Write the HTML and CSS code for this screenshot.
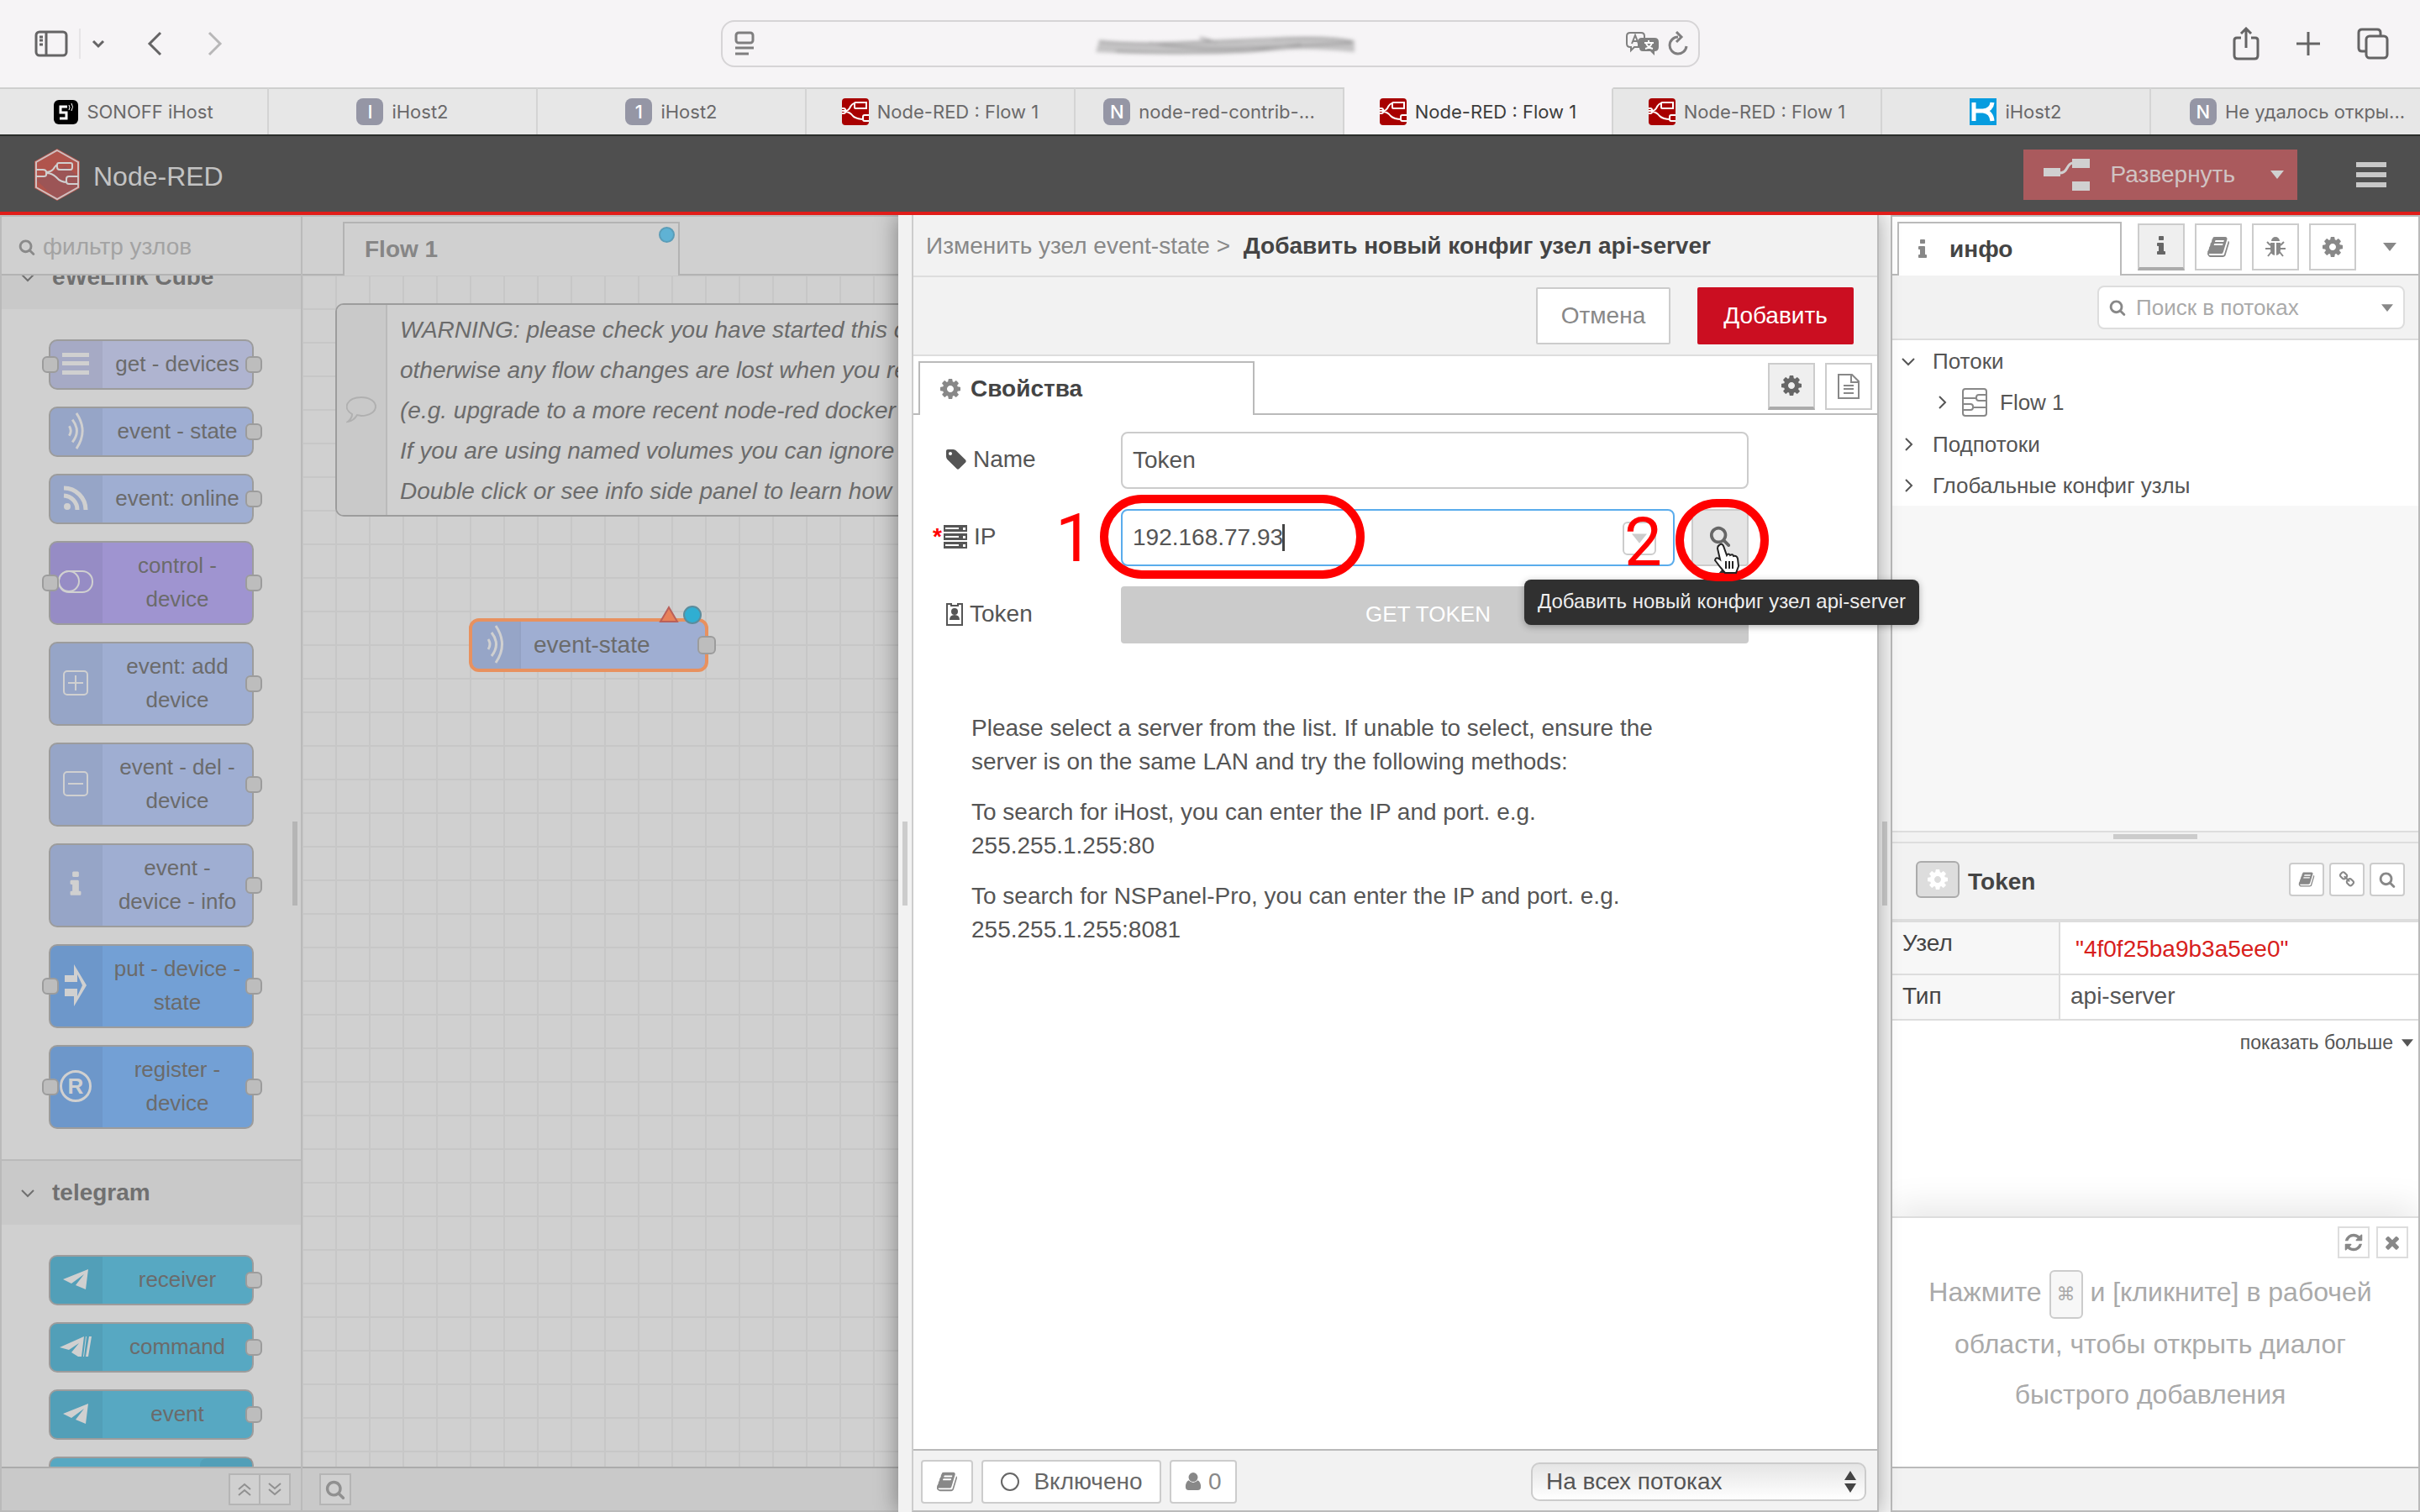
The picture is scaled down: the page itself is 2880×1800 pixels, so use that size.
FILE: index.html
```html
<!DOCTYPE html>
<html lang="ru">
<head>
<meta charset="utf-8">
<title>Node-RED : Flow 1</title>
<link rel="stylesheet" href="styles.css">
</head>
<body>
<svg class="defs" aria-hidden="true">
  <symbol id="search" viewBox="0 0 1792 1792"><path d="M1216 832q0-185-131.500-316.500t-316.500-131.500-316.500 131.500-131.500 316.500 131.500 316.500 316.500 131.500 316.500-131.500 131.500-316.500zm512 832q0 52-38 90t-90 38q-54 0-90-38l-343-342q-179 124-399 124-143 0-273.500-55.500t-225-150-150-225-55.500-273.500 55.500-273.500 150-225 225-150 273.500-55.500 273.500 55.500 225 150 150 225 55.500 273.500q0 220-124 399l343 343q37 37 37 90z"/></symbol>
  <symbol id="cog" viewBox="0 0 1792 1792"><path d="M1152 896q0-106-75-181t-181-75-181 75-75 181 75 181 181 75 181-75 75-181zm512-109v222q0 12-8 23t-20 13l-185 28q-19 54-39 91 35 50 107 138 10 12 10 25t-9 23q-27 37-99 108t-94 71q-12 0-26-9l-138-108q-44 23-91 38-16 136-29 186-7 28-36 28h-222q-14 0-24.500-8.500t-11.500-21.500l-28-184q-49-16-90-37l-141 107q-10 9-25 9-14 0-25-11-126-114-165-168-7-10-7-23 0-12 8-23 15-21 51-66.500t54-70.500q-27-50-41-99l-183-27q-13-2-21-12.500t-8-23.500v-222q0-12 8-23t19-13l186-28q14-46 39-92-40-57-107-138-10-12-10-24 0-10 9-23 26-36 98.500-107.500t94.500-71.500q13 0 26 10l138 107q44-23 91-38 16-136 29-186 7-28 36-28h222q14 0 24.500 8.500t11.500 21.500l28 184q49 16 90 37l142-107q9-9 24-9 13 0 25 10 129 119 165 170 7 8 7 22 0 12-8 23-15 21-51 66.500t-54 70.500q26 50 41 98l183 28q13 2 21 12.500t8 23.500z"/></symbol>
  <symbol id="book" viewBox="0 0 1792 1792"><path d="M1703 478q40 57 18 129l-275 906q-19 64-76.500 107.500t-122.500 43.500h-923q-77 0-148.500-53.500t-99.500-131.500q-24-67-2-127 0-4 3-27t4-37q1-8-3-21.500t-3-19.500q2-11 8-21t16.500-23.500 16.500-23.500q23-38 45-91.500t30-91.500q3-10 .5-30t-.5-28q3-11 17-28t17-23q21-36 42-92t25-90q1-9-2.500-32t.5-28q4-13 22-30.500t22-22.500q19-26 42.500-84.500t27.500-96.500q1-8-3-25.500t-2-26.500q2-8 9-18t18-23 17-21q8-12 16.500-30.500t15-35 16-36 19.500-32 26.500-23.500 36-11.500 47.500 5.500l-1 3q38-9 51-9h761q74 0 114 56t18 130l-274 906q-36 119-71.500 153.500t-128.500 34.500h-869q-27 0-38 15-11 16-1 43 24 70 144 70h923q29 0 56-15.500t35-41.500l300-987q7-22 5-57 38 15 59 43zm-1064 2q-4 13 2 22.500t20 9.500h608q13 0 25.500-9.500t16.500-22.500l21-64q4-13-2-22.500t-20-9.500h-608q-13 0-25.500 9.500t-16.500 22.500zm-83 256q-4 13 2 22.500t20 9.500h608q13 0 25.500-9.500t16.500-22.500l21-64q4-13-2-22.500t-20-9.500h-608q-13 0-25.500 9.500t-16.500 22.500z"/></symbol>
  <symbol id="refresh" viewBox="0 0 1792 1792"><path d="M1639 1056q0 5-1 7-64 268-268 434.500t-478 166.500q-146 0-282.500-55t-243.500-157l-129 129q-19 19-45 19t-45-19-19-45v-448q0-26 19-45t45-19h448q26 0 45 19t19 45-19 45l-137 137q71 66 161 102t187 36q134 0 250-65t186-179q11-17 53-117 8-23 30-23h192q13 0 22.500 9.500t9.500 22.500zm25-800v448q0 26-19 45t-45 19h-448q-26 0-45-19t-19-45 19-45l138-138q-148-137-349-137-134 0-250 65t-186 179q-11 17-53 117-8 23-30 23h-199q-13 0-22.500-9.500t-9.500-22.500v-7q65-268 270-434.500t480-166.500q146 0 284 55.500t245 156.500l130-129q19-19 45-19t45 19 19 45z"/></symbol>
  <symbol id="times" viewBox="0 0 1792 1792"><path d="M1490 1322q0 40-28 68l-136 136q-28 28-68 28t-68-28l-294-294-294 294q-28 28-68 28t-68-28l-136-136q-28-28-28-68t28-68l294-294-294-294q-28-28-28-68t28-68l136-136q28-28 68-28t68 28l294 294 294-294q28-28 68-28t68 28l136 136q28 28 28 68t-28 68l-294 294 294 294q28 28 28 68z"/></symbol>
  <symbol id="tag" viewBox="128 128 1536 1536"><path d="M576 448q0-53-37.500-90.500t-90.500-37.500-90.500 37.500-37.500 90.500 37.500 90.500 90.500 37.500 90.500-37.500 37.500-90.500zm1067 576q0 53-37 90l-491 492q-39 37-91 37-53 0-90-37l-715-716q-38-37-64.500-101t-26.500-117v-416q0-52 38-90t90-38h416q53 0 117 26.500t102 64.500l715 714q37 39 37 91z"/></symbol>
  <symbol id="info" viewBox="0 0 1792 1792"><path d="M1216 1344v128q0 26-19 45t-45 19h-512q-26 0-45-19t-19-45v-128q0-26 19-45t45-19h64v-384h-64q-26 0-45-19t-19-45v-128q0-26 19-45t45-19h384q26 0 45 19t19 45v576h64q26 0 45 19t19 45zm-128-1152v192q0 26-19 45t-45 19h-256q-26 0-45-19t-19-45v-192q0-26 19-45t45-19h256q26 0 45 19t19 45z"/></symbol>
  <symbol id="link" viewBox="0 0 1792 1792"><path d="M1520 1216q0-40-28-68l-208-208q-28-28-68-28-42 0-72 32 3 3 19 18.500t21.500 21.500 15 19 13 25.500 3.500 27.500q0 40-28 68t-68 28q-15 0-27.500-3.500t-25.500-13-19-15-21.500-21.500-18.500-19q-33 31-33 73 0 40 28 68l206 207q27 27 68 27 40 0 68-26l147-146q28-28 28-67zm-703-705q0-40-28-68l-206-207q-28-28-68-28-39 0-68 27l-147 146q-28 28-28 67 0 40 28 68l208 208q27 27 68 27 42 0 72-31-3-3-19-18.500t-21.500-21.500-15-19-13-25.500-3.500-27.500q0-40 28-68t68-28q15 0 27.500 3.500t25.500 13 19 15 21.500 21.500 18.500 19q33-31 33-73zm895 705q0 120-85 203l-147 146q-83 83-203 83-121 0-204-85l-206-207q-83-83-83-203 0-123 88-209l-88-88q-86 88-208 88-120 0-204-84l-208-208q-84-84-84-204t85-203l147-146q83-83 203-83 121 0 204 85l206 207q83 83 83 203 0 123-88 209l88 88q86-88 208-88 120 0 204 84l208 208q84 84 84 204z"/></symbol>
  <symbol id="bug" viewBox="0 0 28 28"><path d="M9 7a5 5 0 0 1 10 0z"/><path d="M8 9h5v15q-5-1-5-7zM15 9h5v8q0 6-5 7z"/><path d="M8 12L4 8M20 12l4-4M8 16H2M20 16h6M9 20l-4 5M19 20l4 5" fill="none" stroke="currentColor" stroke-width="2"/></symbol>
  <symbol id="user" viewBox="0 0 22 28"><circle cx="11" cy="8" r="6"/><path d="M5 12q6 6 12 0 4 2 4 9 0 4-4 4H5q-4 0-4-4 0-7 4-9z"/></symbol>
  <symbol id="down" viewBox="0 0 18 18"><path d="M2 6l7 7 7-7" fill="none" stroke="currentColor" stroke-width="2"/></symbol>
  <symbol id="right" viewBox="0 0 18 18"><path d="M6 2l7 7-7 7" fill="none" stroke="currentColor" stroke-width="2"/></symbol>
  <symbol id="caret" viewBox="0 0 16 10"><path d="M0 0h16l-8 10z"/></symbol>
  <symbol id="wave" viewBox="0 0 24 48"><path d="M4 18q4 6 0 12M8 10q11 14 0 28M13 2q15 22 0 44" fill="none" stroke="currentColor" stroke-width="3"/></symbol>
  <symbol id="rss" viewBox="0 0 30 30"><circle cx="5" cy="25" r="4"/><path d="M1 12a17 17 0 0 1 16 17M1 3a26 26 0 0 1 26 26" fill="none" stroke="currentColor" stroke-width="5"/></symbol>
  <symbol id="plane" viewBox="0 0 30 26"><path d="M0 13L30 1l-3 24-12-5 10-13-15 11z"/></symbol>
  <symbol id="plane2" viewBox="0 0 38 26"><path d="M0 14L29 1l-3 24h-4l-8-5 9-11-12 8z"/><path d="M31 1h1l-3 24h-1zM35 1h3l-4 24h-3z"/></symbol>
  <symbol id="nr" viewBox="0 0 32 32"><rect width="32" height="32" rx="4" fill="#a80000"/><path d="M0 15h4q3 0 5-3 3-6 6-6M4 16q5 0 9 5 4 4 13 4M15 6q0-1 1-1h13v7H16q-1 0-1-1zM32 20h-5q-2 0-2 2v3q0 2 2 2h5M0 12h2q2 0 2 2v2q0 2-2 2H0" fill="none" stroke="#fff" stroke-width="2"/></symbol>
</svg>

<header class="browser">
  <div class="toolbar">
    <div class="tools-left">
      <svg width="40" height="32" viewBox="0 0 40 32" class="line dark"><rect x="2" y="2" width="36" height="28" rx="4"/><path d="M14 2v28M6 8h4M6 12h4M6 17h4"/></svg>
      <span class="tool-divider"></span>
      <svg width="16" height="12" viewBox="0 0 16 12" class="line dark menu-arrow"><path d="M2 3l6 6 6-6"/></svg>
      <svg width="18" height="30" viewBox="0 0 18 30" class="line dark back"><path d="M16 2L3 15l13 13"/></svg>
      <svg width="18" height="30" viewBox="0 0 18 30" class="line light"><path d="M2 2l13 13L2 28"/></svg>
    </div>
    <div class="address">
      <svg width="24" height="30" viewBox="0 0 24 30" class="line mid"><rect x="2" y="2" width="20" height="12" rx="3"/><path d="M1 20h22M1 27h16"/></svg>
      <svg class="scribble" width="320" height="34" viewBox="0 0 320 34"><path d="M10 12q50 3 90 2t110-3q60-6 104 0v14q-50-5-80-3-50 5-110 5Q60 28 6 25z" fill="#c4c3c4"/><path d="M10 12q40 4 90 2t120-5 92 4M70 14q50 8 100 7t140-7M130 8l20 5M30 24q80 4 160 0l60-8" fill="none" stroke="#9c9b9c" stroke-width="2"/></svg>
      <div class="address-end">
        <svg width="40" height="30" viewBox="0 0 40 30"><path d="M5 2h13q4 0 4 4v3h-3q-4 0-4 4v6h-5l-4 4v-4H5q-4 0-4-4V6q0-4 4-4z" fill="none" stroke="#808080" stroke-width="2"/><path d="M7 15l4-10 4 10M8 12h5" fill="none" stroke="#808080" stroke-width="2"/><path d="M20 8h14q5 0 5 5v6q0 5-5 5v5l-5-5h-9q-4 0-4-4v-8q0-4 4-4z" fill="#808080"/><path d="M22 14h11M27 11v3M31 14q-2 6-8 7M24 15q3 5 8 6" fill="none" stroke="#fff" stroke-width="2"/></svg>
        <svg width="24" height="30" viewBox="0 0 24 30" class="line mid"><path d="M12 7a10 10 0 1 0 10 11M10 1l6 6-6 6"/></svg>
      </div>
    </div>
    <div class="tools-right">
      <svg width="32" height="40" viewBox="0 0 32 40" class="line dark"><path d="M10 13H5q-3 0-3 3v18q0 4 4 4h20q4 0 4-4V16q0-3-3-3h-5M16 25V3M10 8l6-6 6 6"/></svg>
      <svg width="28" height="28" viewBox="0 0 28 28" class="line dark"><path d="M14 0v28M0 14h28"/></svg>
      <svg width="38" height="38" viewBox="0 0 38 38" class="line dark"><rect x="11" y="10" width="25" height="26" rx="4"/><path d="M11 28H6q-4 0-4-4V6q0-4 4-4h18q4 0 4 4v4"/></svg>
    </div>
  </div>
  <nav class="tabs">
    <a class="tab" href="#"><svg width="29" height="29" viewBox="0 0 29 29"><rect width="29" height="29" rx="6" fill="#000"/><path d="M16 8H8v7h7v7H7" fill="none" stroke="#fff" stroke-width="3"/><path d="M18 6q2 3 0 6M21 4q3 4 0 9" fill="none" stroke="#fff" stroke-width="1"/></svg>SONOFF iHost</a>
    <a class="tab" href="#"><span class="letter">I</span>iHost2</a>
    <a class="tab" href="#"><span class="letter">1</span>iHost2</a>
    <a class="tab" href="#"><svg width="32" height="32"><use href="#nr"/></svg>Node-RED : Flow 1</a>
    <a class="tab" href="#"><span class="letter">N</span>node-red-contrib-...</a>
    <a class="tab current" href="#"><svg width="32" height="32"><use href="#nr"/></svg>Node-RED : Flow 1</a>
    <a class="tab" href="#"><svg width="32" height="32"><use href="#nr"/></svg>Node-RED : Flow 1</a>
    <a class="tab" href="#"><svg width="32" height="32" viewBox="0 0 32 32"><path d="M0 0h32v32H0z" fill="#069cdf"/><path d="M5 5v22M6 15h10q10 1 11 12M27 5q-1 9-11 10" fill="none" stroke="#fff" stroke-width="5"/></svg>iHost2</a>
    <a class="tab last" href="#"><span class="letter">N</span>Не удалось откры...</a>
  </nav>
</header>

<div class="app-header">
  <svg width="56" height="64" viewBox="0 0 56 64"><path d="M28 1l27 15v32L28 63 1 48V16z" fill="#b0544c"/><path d="M3 38l24 23 26-14V34L38 22z" fill="#9c5556"/><path d="M28 3l25 14v30L28 61 3 47V17z" fill="none" stroke="#cfc0c0" stroke-width="2"/><path d="M3 26h8q4 0 4 3v3q0 2-3 2H3M15 29q7 0 10-6 2-3 4-3M15 30q7 0 12 5 5 6 13 6M30 18h14q2 0 2 2v3q0 3-2 3H31q-3 0-3-3v-3q0-2 2-2zM53 34H42q-3 0-3 3v3q0 3 3 3h11" fill="none" stroke="#d0d0d0" stroke-width="2"/></svg>
  <span class="app-name">Node-RED</span>
  <button class="deploy"><svg width="56" height="38" viewBox="0 0 56 38"><path d="M0 11h20v10H0zM34 0h21v11H34zM34 27h21v11H34z" fill="#d0d0d0"/><path d="M19 17q6 0 9-6t7-6" fill="none" stroke="#d0d0d0" stroke-width="3"/></svg><span>Развернуть</span><svg width="16" height="10" class="deploy-caret"><use href="#caret"/></svg></button>
  <button class="main-menu" aria-label="Меню"><svg width="36" height="30" viewBox="0 0 36 30"><path d="M0 0h36v6H0zM0 12h36v6H0zM0 24h36v6H0z"/></svg></button>
</div>

<main class="editor">
  <aside class="palette">
    <label class="filter"><svg width="20" height="20"><use href="#search"/></svg><input type="text" placeholder="фильтр узлов" aria-label="фильтр узлов"></label>
    <div class="palette-scroll">
      <h3 class="category first"><svg width="18" height="18"><use href="#down"/></svg>eWeLink Cube</h3>
      <div class="nodes">
        <div class="node pale in out"><span class="node-icon"><svg width="32" height="28" viewBox="0 0 32 28"><path d="M0 1h32v5H0zM0 11h32v5H0zM0 22h32v5H0z"/></svg></span><span class="node-label">get - devices</span></div>
        <div class="node blue out"><span class="node-icon"><svg width="24" height="46"><use href="#wave"/></svg></span><span class="node-label">event - state</span></div>
        <div class="node blue out"><span class="node-icon"><svg width="30" height="30"><use href="#rss"/></svg></span><span class="node-label">event: online</span></div>
        <div class="node tall violet in out"><span class="node-icon"><svg width="42" height="28" viewBox="0 0 42 28" class="line"><rect x="1" y="1" width="40" height="25" rx="12"/><circle cx="13" cy="13" r="12"/></svg></span><span class="node-label">control -<br>device</span></div>
        <div class="node tall blue out"><span class="node-icon"><svg width="30" height="30" viewBox="0 0 30 30" class="line"><rect x="1" y="1" width="28" height="28" rx="4"/><path d="M6 15h18M15 6v18"/></svg></span><span class="node-label">event: add<br>device</span></div>
        <div class="node tall blue out"><span class="node-icon"><svg width="30" height="30" viewBox="0 0 30 30" class="line"><rect x="1" y="1" width="28" height="28" rx="4"/><path d="M6 15h18"/></svg></span><span class="node-label">event - del -<br>device</span></div>
        <div class="node tall blue out"><span class="node-icon"><svg width="36" height="36"><use href="#info"/></svg></span><span class="node-label">event -<br>device - info</span></div>
        <div class="node tall azure in out"><span class="node-icon"><svg width="26" height="50" viewBox="0 0 26 50"><path d="M0 13h11V0l15 25-15 25V38H0V29h15v9l6-13-6-13v9H0z"/></svg></span><span class="node-label">put - device -<br>state</span></div>
        <div class="node tall azure in out"><span class="node-icon"><span class="registered">R</span></span><span class="node-label">register -<br>device</span></div>
      </div>
      <h3 class="category"><svg width="18" height="18"><use href="#down"/></svg>telegram</h3>
      <div class="nodes">
        <div class="node cyan out"><span class="node-icon"><svg width="30" height="26"><use href="#plane"/></svg></span><span class="node-label">receiver</span></div>
        <div class="node cyan out"><span class="node-icon"><svg width="38" height="26"><use href="#plane2"/></svg></span><span class="node-label">command</span></div>
        <div class="node cyan out"><span class="node-icon"><svg width="30" height="26"><use href="#plane"/></svg></span><span class="node-label">event</span></div>
        <div class="node cyan reverse"><span class="node-icon"></span><span class="node-label"></span></div>
      </div>
      <span class="palette-thumb"></span>
    </div>
    <footer class="dim-footer end">
      <button aria-label="Свернуть"><svg width="16" height="18" viewBox="0 0 16 18" class="line"><path d="M1 9l7-6 7 6M1 16l7-6 7 6"/></svg></button><button aria-label="Развернуть все"><svg width="16" height="18" viewBox="0 0 16 18" class="line"><path d="M1 2l7 6 7-6M1 9l7 6 7-6"/></svg></button>
    </footer>
  </aside>

  <section class="workspace">
    <div class="flow-tabs"><a class="flow-tab" href="#">Flow 1<span class="dot"></span></a></div>
    <div class="canvas">
      <div class="comment">
        <span class="comment-icon"><svg width="36" height="32" viewBox="0 0 36 32"><path d="M18 1c10 0 17 5 17 11s-7 11-17 11l-5-1q-4 7-11 8 5-4 5-9C-5 14 1 1 18 1z" fill="none" stroke="#b0b0b0" stroke-width="2"/></svg></span>
        <p>WARNING: please check you have started this container<br>otherwise any flow changes are lost when you restart<br>(e.g. upgrade to a more recent node-red docker<br>If you are using named volumes you can ignore<br>Double click or see info side panel to learn how</p>
      </div>
      <div class="flow-node">
        <span class="node-icon"><svg width="24" height="48"><use href="#wave"/></svg></span>
        <span>event-state</span>
        <svg class="badges" width="72" height="24" viewBox="0 0 72 24"><path d="M13 3l10 17H3z" fill="#e8815a" stroke="#b9605a" stroke-width="2"/><circle cx="41" cy="12" r="10" fill="#30aed2" stroke="#5c8c9c" stroke-width="2"/></svg>
      </div>
    </div>
    <footer class="dim-footer"><button aria-label="Найти"><svg width="24" height="24"><use href="#search"/></svg></button></footer>
  </section>

  <section class="tray">
    <span class="tray-grip"><i></i></span>
    <div class="tray-body">
      <h2 class="tray-title"><span>Изменить узел event-state &gt;</span> Добавить новый конфиг узел api-server</h2>
      <div class="tray-actions"><button class="cancel">Отмена</button><button class="add">Добавить</button></div>
      <div class="tray-tabs">
        <a class="tray-tab" href="#"><svg width="28" height="28"><use href="#cog"/></svg>Свойства</a>
        <div class="icon-buttons"><button class="on" aria-label="Свойства"><svg width="28" height="28"><use href="#cog"/></svg></button><button aria-label="Описание"><svg width="26" height="30" viewBox="0 0 26 30" class="line"><path d="M1 1h16l8 8v20H1zM16 2v8h8M7 14h12M7 18h12M7 23h12"/></svg></button></div>
      </div>
      <form class="form">
        <div class="row">
          <label for="name"><svg width="24" height="24"><use href="#tag"/></svg>Name</label>
          <input id="name" type="text" value="Token">
        </div>
        <div class="row">
          <label for="ip"><b class="required">*</b><svg width="28" height="28" viewBox="0 0 28 28"><path d="M0 0h28v8H0zM0 10h28v8H0zM0 20h28v8H0z"/><path d="M2 3h16v2H2zM2 13h16v2H2zM2 23h16v2H2zM23 3h3v3h-3zM23 13h3v3h-3zM23 23h3v3h-3z" fill="#fff"/></svg>IP</label>
          <span class="ip-field"><input id="ip" type="text" value="192.168.77.93"><i class="text-caret"></i><span class="toggle"><svg width="18" height="12"><use href="#caret"/></svg></span></span>
          <button type="button" class="find" aria-label="Найти"><svg width="26" height="26"><use href="#search"/></svg></button>
          <span class="ring ring-one"></span><span class="mark mark-one">1</span>
          <span class="mark mark-two">2</span>
          <span class="tooltip">Добавить новый конфиг узел api-server</span>
          <svg class="pointer" width="34" height="38" viewBox="0 0 34 38"><path d="M8 3q3-3 5 1l4 11q2-3 4 0 3-2 4 1 4-1 5 3l1 9-3 8H15Q8 28 3 21q1-5 6-1L6 7q0-3 2-4z" fill="#fff" stroke="#222" stroke-width="2"/><path d="M16 22v9M20 22v9M24 22v9" stroke="#222" stroke-width="2"/></svg>
          <span class="ring ring-two"></span>
        </div>
        <div class="row">
          <label for="token"><svg width="20" height="28" viewBox="0 0 20 28"><path d="M1 2h5v2h8V2h5v25H1z" fill="none" stroke="currentColor" stroke-width="2"/><circle cx="10" cy="11" r="4"/><path d="M4 21q0-6 6-6t6 6z"/></svg>Token</label>
          <button type="button" id="token" class="get-token">GET TOKEN</button>
        </div>
        <div class="help">
          <p>Please select a server from the list. If unable to select, ensure the<br>server is on the same LAN and try the following methods:</p>
          <p>To search for iHost, you can enter the IP and port. e.g.<br>255.255.1.255:80</p>
          <p>To search for NSPanel-Pro, you can enter the IP and port. e.g.<br>255.255.1.255:8081</p>
        </div>
      </form>
      <footer class="tray-footer">
        <button aria-label="Справка"><svg width="26" height="26"><use href="#book"/></svg></button>
        <button class="enabled"><svg width="24" height="24" viewBox="0 0 24 24" class="line"><circle cx="12" cy="12" r="10"/></svg>Включено</button>
        <button><svg width="20" height="26"><use href="#user"/></svg>0</button>
        <span class="scope"><select aria-label="Область"><option>На всех потоках</option></select><svg width="14" height="26" viewBox="0 0 14 26"><path d="M0 11l7-11 7 11zM0 15h14l-7 11z"/></svg></span>
      </footer>
    </div>
  </section>

  <span class="separator"><i></i></span>

  <aside class="sidebar">
    <div class="side-tabs">
      <a class="side-tab" href="#"><svg width="28" height="28"><use href="#info"/></svg>инфо</a>
      <div class="icon-buttons"><button class="on" aria-label="Инфо"><svg width="28" height="28"><use href="#info"/></svg></button><button aria-label="Справка"><svg width="28" height="28"><use href="#book"/></svg></button><button aria-label="Отладка"><svg width="28" height="28"><use href="#bug"/></svg></button><button aria-label="Настройки"><svg width="28" height="28"><use href="#cog"/></svg></button><svg class="side-caret" width="16" height="10"><use href="#caret"/></svg></div>
    </div>
    <div class="side-search"><label><svg width="20" height="20"><use href="#search"/></svg><input type="text" placeholder="Поиск в потоках" aria-label="Поиск в потоках"><svg width="14" height="9"><use href="#caret"/></svg></label></div>
    <ul class="tree">
      <li><svg width="18" height="18"><use href="#down"/></svg>Потоки</li>
      <li class="child"><svg width="18" height="18"><use href="#right"/></svg><svg width="30" height="34" viewBox="0 0 30 34" class="line flow-icon"><rect x="1" y="1" width="28" height="32" rx="3"/><path d="M1 12h16M28 8h-8q-3 0-3 3v1q0 3 3 3h8M2 19h8q3 0 3 3v1q0 3-3 3H2M13 23h16"/></svg>Flow 1</li>
      <li><svg width="18" height="18"><use href="#right"/></svg>Подпотоки</li>
      <li><svg width="18" height="18"><use href="#right"/></svg>Глобальные конфиг узлы</li>
    </ul>
    <div class="splitter"><i></i></div>
    <div class="info-head">
      <span class="info-icon"><svg width="28" height="28"><use href="#cog"/></svg></span>
      <h4>Token</h4>
      <div class="info-buttons"><button aria-label="Справка"><svg width="20" height="20"><use href="#book"/></svg></button><button aria-label="Ссылка"><svg width="20" height="20"><use href="#link"/></svg></button><button aria-label="Найти"><svg width="20" height="20"><use href="#search"/></svg></button></div>
    </div>
    <table class="props">
      <tr><th scope="row">Узел</th><td class="id">"4f0f25ba9b3a5ee0"</td></tr>
      <tr><th scope="row">Тип</th><td>api-server</td></tr>
    </table>
    <a class="more" href="#">показать больше<svg width="14" height="9"><use href="#caret"/></svg></a>
    <div class="tip">
      <div class="tip-buttons"><button aria-label="Обновить"><svg width="24" height="24"><use href="#refresh"/></svg></button><button aria-label="Закрыть"><svg width="24" height="24"><use href="#times"/></svg></button></div>
      <p>Нажмите <kbd>⌘</kbd> и [кликните] в рабочей<br>области, чтобы открыть диалог<br>быстрого добавления</p>
    </div>
    <footer class="side-footer"></footer>
  </aside>
</main>
</body>
</html>
```
FILE: styles.css
```css
*, *::before, *::after { box-sizing: border-box; }
body {
  margin: 0;
  height: 100vh;
  display: flex;
  flex-direction: column;
  overflow: hidden;
  font: 28px/40px "Liberation Sans", Arial, sans-serif;
  color: #555;
  background: #f2f2f2;
}
button, input, select { font: inherit; color: inherit; margin: 0; padding: 0; outline: 0; }
button { background: #fff; border: 2px solid #ccc; display: flex; align-items: center; justify-content: center; }
a { color: inherit; text-decoration: none; }
h2, h3, h4, p, ul { margin: 0; padding: 0; }
svg { fill: currentColor; flex: none; display: block; }
.defs { position: absolute; width: 0; height: 0; }
.line { fill: none; stroke: currentColor; stroke-width: 2; }

/* browser chrome */
.browser { flex: none; color: #6a696a; }
.toolbar { height: 104px; display: grid; grid-template-columns: 1fr 1165px 1fr; align-items: center; background: #f6f4f6; }
.toolbar .line { stroke-width: 3; }
.dark { color: #656465; }
.mid { color: #7f7e7f; }
.light { color: #b8b7b8; }
.tools-left { display: flex; align-items: center; padding-left: 41px; }
.tool-divider { width: 2px; height: 36px; margin: 0 13px; background: #e6e4e6; }
.back { margin: 0 54px 0 50px; }
.address { height: 56px; display: flex; align-items: center; justify-content: space-between; padding: 0 12px 0 14px; border: 2px solid #d6d4d6; border-radius: 16px; }
.scribble { margin: 4px 0 0 84px; filter: blur(2px); }
.address-end { display: flex; gap: 10px; }
.tools-right { display: flex; align-items: center; justify-content: flex-end; gap: 44px; padding-right: 37px; }
.tabs { display: grid; grid-template-columns: repeat(9, minmax(0, 1fr)); height: 56px; font: 22px/32px Inter, sans-serif; }
.tab { display: flex; align-items: center; justify-content: center; gap: 10px; white-space: nowrap; background: #e7e7e7; border-right: 2px solid #d4d4d4; border-top: 2px solid #cfcfcf; }
.tab.current { background: #f6f4f6; border-top-color: #f6f4f6; color: #3c3c3c; }
.tab.last { border-right: 0; padding-left: 28px; }
.letter { width: 32px; height: 32px; border-radius: 8px; background: #9596a5; color: #fff; text-align: center; font-weight: 500; }

/* application header */
.app-header { flex: none; height: 96px; display: flex; align-items: center; padding: 2px 40px 0; background: #4f4f4f; border-top: 2px solid #2b2e2b; border-bottom: 4px solid #e01d19; color: #c3c3c3; }
.app-name { font-size: 32px; margin-left: 15px; padding-top: 4px; }
.deploy { height: 60px; margin-left: auto; padding: 0 16px 0 24px; background: #aa5a5d; border: 0; color: #d0c3c3; }
.deploy span { margin: 0 42px 0 24px; }
.deploy-caret { color: #d0d0d0; }
.main-menu { margin-left: 70px; background: none; border: 0; color: #c8c8c8; }

/* palette */
.editor { flex: 1; min-height: 0; display: flex; }
.palette { width: 360px; flex: none; display: flex; flex-direction: column; background: #d0d0d0; border: 2px solid #bababa; color: #6b6b6b; }
.filter { flex: none; height: 70px; display: flex; align-items: center; padding: 4px 0 0 20px; gap: 9px; border-bottom: 2px solid #b3b3b3; color: #8a8a8a; }
.filter input { width: 280px; height: 40px; background: none; border: 0; }
.filter input::placeholder { color: #a3a3a3; opacity: 1; }
.palette-scroll { flex: 1; min-height: 0; overflow: hidden; position: relative; }
.palette-thumb { position: absolute; right: 4px; top: 650px; width: 6px; height: 100px; background: #b5b5b5; }
.category { height: 78px; display: flex; align-items: center; gap: 20px; padding-left: 22px; font-size: 28px; background: #c9c9c9; border-top: 2px solid #bababa; color: #707070; }
.category.first { margin-top: -38px; }
.nodes { display: flex; flex-direction: column; gap: 20px; padding: 36px 56px; }
.node { position: relative; height: 60px; flex: none; display: flex; border: 2px solid #9c9c9c; border-radius: 10px; font-size: 26px; text-align: center; }
.node.tall { height: 100px; }
.node-icon { width: 62px; flex: none; display: flex; align-items: center; justify-content: center; padding: 0 2px 2px 0; color: #d0d0d0; background: rgba(0, 0, 0, .05); border-radius: 8px 0 0 8px; }
.node.reverse { flex-direction: row-reverse; }
.node-label { flex: 1; align-self: center; padding-bottom: 2px; }
.pale { background: #afb4d0; }
.blue { background: #9faed2; }
.violet { background: #9f94d0; }
.azure { background: #73a0d5; }
.cyan { background: #57a8c2; }
.in::before, .out::after, .flow-node::after { content: ""; position: absolute; top: calc(50% - 10px); width: 20px; height: 20px; border: 2px solid #9c9c9c; border-radius: 6px; background: #bdbdbd; }
.in::before { left: -10px; }
.out::after { right: -12px; }
.registered { width: 38px; height: 38px; border: 3px solid #d0d0d0; border-radius: 50%; font: bold 26px/32px "Liberation Sans", sans-serif; }
.dim-footer { flex: none; height: 52px; display: flex; align-items: center; padding: 0 12px 0 20px; background: #c9c9c9; border-top: 2px solid #ababab; color: #909090; }
.dim-footer.end { justify-content: flex-end; }
.dim-footer button { width: 38px; height: 38px; background: #d0d0d0; border-color: #b5b5b5; }
.dim-footer button + button { margin-left: -2px; }

/* workspace */
.workspace { flex: 1; min-width: 0; display: flex; flex-direction: column; background: #d0d0d0; border: solid #bababa; border-width: 2px 0; overflow: hidden; }
.flow-tabs { flex: none; height: 70px; padding: 6px 48px 0; border-bottom: 2px solid #b3b3b3; }
.flow-tab { position: relative; display: block; width: 401px; height: 64px; padding-left: 24px; line-height: 62px; font-weight: bold; color: #868686; background: #d0d0d0; border: 2px solid #b3b3b3; border-bottom: 0; }
.dot { position: absolute; right: 4px; top: 4px; width: 19px; height: 19px; border-radius: 50%; background: #5fb2d4; border: 2px solid #5a9db8; }
.canvas { flex: 1; min-height: 0; position: relative; overflow: hidden; color: #6b6b6b; background-image: linear-gradient(90deg, #c7c7c7 2px, transparent 2px), linear-gradient(#c7c7c7 2px, transparent 2px); background-size: 40px 40px; background-position: -1px -1px; }
.comment { position: absolute; left: 39px; top: 33px; width: 900px; height: 254px; display: flex; background: #d0d0d0; border: 2px solid #9c9c9c; border-radius: 10px; font-style: italic; line-height: 48px; white-space: nowrap; }
.comment-icon { width: 60px; display: flex; align-items: center; justify-content: center; background: #c9c9c9; border-right: 2px solid #bababa; border-radius: 8px 0 0 8px; }
.comment p { padding: 6px 0 0 15px; }
.flow-node { position: absolute; left: 198px; top: 408px; width: 285px; height: 64px; display: flex; align-items: center; background: #9faed2; border: 4px solid #e8915f; border-radius: 12px; }
.flow-node .node-icon { width: 58px; height: 56px; margin-right: 15px; border-right: 2px solid #94a2c4; }
.flow-node::after { right: -13px; top: 17px; width: 22px; height: 22px; }
.badges { position: absolute; right: -16px; top: -20px; }

/* edit tray */
.tray { position: relative; z-index: 2; width: 1167px; flex: none; display: flex; background: #f2f2f2; box-shadow: -2px 0 24px rgba(0, 0, 0, .35); clip-path: inset(0 -60px 0 -40px); }
.tray-grip { width: 16px; flex: none; display: flex; align-items: center; justify-content: center; }
.tray-grip i, .separator i { width: 6px; height: 100px; background: #ccc; }
.tray-body { flex: 1; min-width: 0; display: flex; flex-direction: column; border: 2px solid #bababa; border-top: 0; border-left-color: #ccc; background: #fff; }
.tray-title { flex: none; height: 74px; padding: 0 15px; font-size: 28px; line-height: 74px; white-space: nowrap; color: #444; background: #f2f2f2; border-bottom: 2px solid #ddd; }
.tray-title span { margin-right: 8px; font-weight: normal; color: #888; }
.tray-actions { flex: none; height: 94px; display: flex; justify-content: flex-end; gap: 32px; padding: 12px 28px; background: #f2f2f2; border-bottom: 2px solid #ddd; }
.tray-actions button { height: 68px; border-radius: 2px; }
.cancel { width: 160px; color: #888; }
.add { width: 186px; color: #fff; background: #cb0e21; border-color: #cb0e21; }
.tray-tabs, .side-tabs { flex: none; height: 70px; display: flex; justify-content: space-between; padding: 6px 6px 0; background: #fff; border-bottom: 2px solid #bababa; }
.tray-tab, .side-tab { display: flex; align-items: center; height: 64px; padding: 0 22px; background: #fff; border: 2px solid #bababa; border-bottom: 0; font-weight: bold; color: #444; }
.tray-tab { width: 400px; gap: 10px; }
.tray-tab svg, .side-tab svg { color: #888; }
.icon-buttons { display: flex; gap: 12px; align-items: flex-start; padding-top: 2px; color: #888; }
.icon-buttons button { width: 56px; height: 56px; }
.icon-buttons .on { color: #666; background: #efefef; border-bottom: 4px solid #ababab; }
.form { flex: 1; min-height: 0; display: flex; flex-direction: column; gap: 24px; padding: 20px 153px 0 39px; }
.row { position: relative; display: flex; align-items: center; height: 68px; }
.row label { width: 208px; flex: none; display: flex; align-items: center; gap: 8px; padding-bottom: 3px; }
.row input { flex: 1; width: 100%; height: 68px; padding: 0 12px; background: #fff; border: 2px solid #ccc; border-radius: 8px; }
.required { margin: 0 -6px 0 -16px; color: red; }
.ip-field { position: relative; flex: 1; display: flex; }
.row .ip-field input { border-color: #5aacec; }
.text-caret { position: absolute; left: 192px; top: 18px; width: 3px; height: 32px; background: #444; }
.toggle { position: absolute; right: 22px; top: 15px; width: 40px; height: 40px; display: flex; align-items: center; justify-content: center; border: 2px solid #ccc; border-radius: 6px; color: #ccc; }
.find { width: 68px; height: 68px; margin-left: 20px; background: #e5e5e5; border-radius: 4px; color: #666; }
.find svg { margin-bottom: 4px; }
.ring { position: absolute; border: 10px solid red; border-radius: 50px; }
.ring-one { left: 183px; top: -17px; width: 315px; height: 100px; }
.ring-two { z-index: 2; left: 868px; top: -12px; width: 111px; height: 98px; }
.mark { position: absolute; font: 80px/80px Roboto, sans-serif; color: red; }
.mark-one { left: 130px; top: -5px; }
.mark-two { left: 807px; top: 0; }
.tooltip { position: absolute; z-index: 2; left: 688px; top: 84px; width: 470px; height: 54px; font-size: 24px; line-height: 52px; text-align: center; white-space: nowrap; color: #eee; background: #303030; border-radius: 8px; box-shadow: 0 2px 8px rgba(0, 0, 0, .3); }
.tooltip::before { content: ""; position: absolute; left: 225px; top: -14px; border: solid transparent; border-width: 0 12px 14px; border-bottom-color: #303030; }
.pointer { position: absolute; z-index: 3; left: 912px; top: 40px; }
.get-token { flex: 1; height: 68px; padding: 0 16px 2px 0; font-size: 26px; color: #fff; background: #cbcbcb; border-color: #cbcbcb; border-radius: 4px; }
.help { padding: 57px 0 0 30px; white-space: nowrap; }
.help p { margin-bottom: 20px; }
.tray-footer { flex: none; height: 73px; display: flex; align-items: center; gap: 10px; padding: 2px 13px 0 9px; background: #f2f2f2; border-top: 2px solid #bababa; color: #888; }
.tray-footer button { height: 52px; padding: 0 16px; gap: 8px; border-radius: 4px; }
.tray-footer .enabled { width: 214px; gap: 16px; color: #666; }
.scope { position: relative; width: 399px; margin-left: auto; color: #444; }
.scope select { appearance: none; display: block; width: 100%; height: 46px; padding: 0 16px; border: 2px solid #ccc; border-radius: 10px; background: linear-gradient(#e5e5e5, #fff); color: #555; }
.scope svg { position: absolute; right: 12px; top: 10px; }

/* sidebar */
.separator { width: 14px; flex: none; display: flex; align-items: center; justify-content: center; }
.sidebar { width: 630px; flex: none; display: flex; flex-direction: column; background: #fff; border: 2px solid #bababa; }
.side-tab { width: 267px; padding: 0 14px; gap: 18px; }
.side-caret { margin: 23px 20px 0 20px; color: #888; }
.side-search { flex: none; height: 77px; display: flex; justify-content: flex-end; padding: 12px 16px; background: #f2f2f2; border-bottom: 2px solid #ddd; }
.side-search label { width: 366px; height: 52px; display: flex; align-items: center; padding: 0 12px; gap: 12px; background: #fff; border: 2px solid #ddd; border-radius: 8px; color: #888; }
.side-search input { flex: 1; min-width: 0; border: 0; font-size: 26px; background: none; }
.side-search input::placeholder { color: #aaa; opacity: 1; }
.tree { flex: none; list-style: none; font-size: 26px; }
.tree li { height: 49px; display: flex; align-items: center; padding-left: 10px; gap: 20px; }
.tree .child { height: 50px; padding-left: 50px; gap: 15px; }
.flow-icon { color: #888; }
.splitter { flex: none; height: 402px; display: flex; align-items: flex-end; justify-content: center; padding-bottom: 3px; border-bottom: 2px solid #ddd; background: linear-gradient(#f7f7f7 387px, #ddd 387px, #ddd 389px, #f2f2f2 389px); }
.splitter i { width: 100px; height: 6px; background: #ccc; }
.info-head { flex: none; height: 94px; display: flex; align-items: center; padding: 0 16px 4px 28px; background: #f2f2f2; border-bottom: 4px solid #ddd; }
.info-icon { width: 52px; height: 44px; display: flex; align-items: center; justify-content: center; background: #ddd; border: 2px solid #ababab; border-radius: 6px; color: #fff; }
.info-head h4 { font-size: 28px; margin-left: 10px; padding-top: 6px; color: #444; }
.info-buttons { display: flex; gap: 6px; margin-left: auto; color: #888; }
.info-buttons button { width: 42px; height: 40px; border-radius: 4px; }
.props { flex: none; width: 100%; border-collapse: collapse; }
.props tr { height: 62px; border-bottom: 2px solid #ddd; }
.props tr + tr { height: 54px; }
.props th { width: 199px; padding: 5px 12px 3px; font-weight: normal; text-align: left; vertical-align: top; color: #444; background: #f7f7f7; border-right: 2px solid #ddd; }
.props td { padding: 5px 12px 3px; vertical-align: top; }
.props .id { padding: 12px 18px 8px; color: #d8201c; }
.more { display: flex; justify-content: flex-end; align-items: center; gap: 10px; padding: 6px 6px; font-size: 23px; }
.tip { height: 298px; margin-top: auto; display: flex; flex-direction: column; padding: 10px 12px; border-top: 2px solid #ddd; box-shadow: 0 -10px 40px rgba(0, 0, 0, .1); clip-path: inset(-50px 0 0 0); }
.tip-buttons { display: flex; justify-content: flex-end; gap: 8px; color: #888; }
.tip-buttons button { width: 38px; height: 38px; border-color: #ddd; }
.tip p { padding: 10px 12px 0 0; font-size: 32px; line-height: 60px; text-align: center; white-space: nowrap; color: #aaa; }
.tip kbd { display: inline-block; vertical-align: middle; width: 40px; height: 58px; font: 22px/54px "DejaVu Sans", sans-serif; background: #f7f7f7; border: 2px solid #ccc; border-radius: 6px; }
.side-footer { flex: none; height: 52px; background: #f2f2f2; border-top: 2px solid #bababa; }
```
